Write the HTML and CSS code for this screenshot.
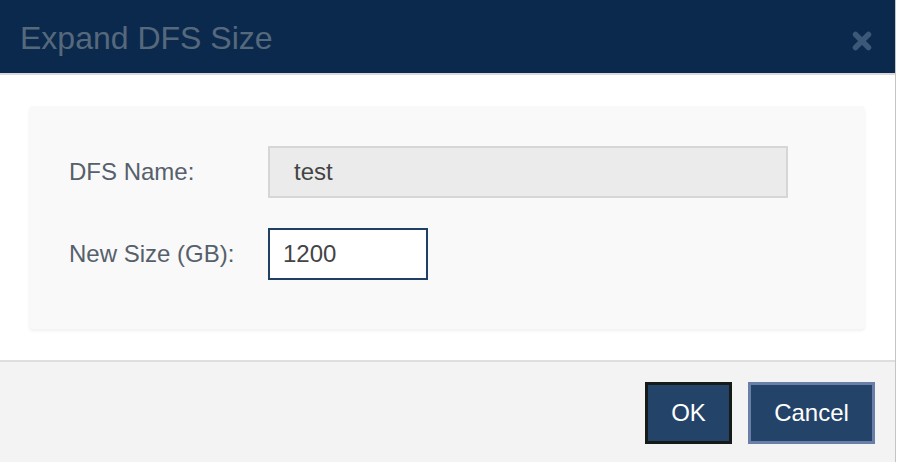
FILE: index.html
```html
<!DOCTYPE html>
<html>
<head>
<meta charset="utf-8">
<link rel="stylesheet" href="styles.css">
</head>
<body>
<div class="dialog">
  <div class="header">
    <div class="title">Expand DFS Size</div>
    <div class="close" aria-label="Close">
      <svg width="20" height="20" viewBox="0 0 20 20"><path d="M3.5 3.5 L16.5 16.5 M16.5 3.5 L3.5 16.5" stroke="#3b5879" stroke-width="5.5" stroke-linecap="round"/></svg>
    </div>
  </div>
  <div class="body">
    <div class="panel">
      <div class="row">
        <div class="label">DFS Name:</div>
        <div class="field field-readonly">test</div>
      </div>
      <div class="row">
        <div class="label">New Size (GB):</div>
        <div class="field field-edit">1200</div>
      </div>
    </div>
  </div>
  <div class="footer">
    <div class="btn btn-ok">OK</div>
    <div class="btn btn-cancel">Cancel</div>
  </div>
</div>
</body>
</html>
```
FILE: styles.css
```css
html, body {
  margin: 0;
  padding: 0;
  background: #ffffff;
}
body {
  font-family: "Liberation Sans", Arial, sans-serif;
  width: 898px;
  height: 462px;
  overflow: hidden;
}
.dialog {
  width: 895px;
  height: 462px;
  border-right: 1px solid #c4c4c4;
  display: flex;
  flex-direction: column;
  background: #ffffff;
}
.header {
  height: 73px;
  flex: none;
  background: #0b294d;
  border-bottom: 2px solid #d9d9d9;
  display: flex;
  align-items: center;
  justify-content: space-between;
  padding: 0 23px 0 20px;
}
.title {
  font-size: 32px;
  color: #56697c;
  line-height: 1;
  padding-top: 2px;
}
.close {
  width: 20px;
  height: 20px;
  display: flex;
  margin-top: 8px;
}
.body {
  padding: 31px 30px 31px 29px;
  flex: none;
}
.panel {
  background: #f9f9f9;
  border-radius: 4px;
  box-shadow: 0 2px 3px rgba(0, 0, 0, 0.06);
  padding: 40px 40px 49px 40px;
  display: flex;
  flex-direction: column;
  gap: 30px;
}
.row {
  display: flex;
  align-items: center;
}
.label {
  width: 199px;
  font-size: 24px;
  color: #56606b;
}
.field {
  box-sizing: border-box;
  height: 52px;
  font-size: 24px;
  color: #444444;
  display: flex;
  align-items: center;
}
.field-readonly {
  width: 520px;
  background: #ebebeb;
  border: 2px solid #d6d6d6;
  padding-left: 24px;
}
.field-edit {
  width: 160px;
  background: #ffffff;
  border: 2px solid #1f3f63;
  padding-left: 13px;
}
.footer {
  flex: 1;
  background: #f3f3f3;
  border-top: 2px solid #dedede;
  display: flex;
  justify-content: flex-end;
  align-items: flex-start;
  gap: 16px;
  padding: 20px 20px 0 0;
}
.btn {
  box-sizing: border-box;
  height: 62px;
  background: #234468;
  color: #ffffff;
  font-size: 24px;
  display: flex;
  align-items: center;
  justify-content: center;
}
.btn-ok {
  width: 87px;
  border: 3px solid #161b17;
}
.btn-cancel {
  width: 127px;
  border: 3px solid #6a7fa8;
}
```
